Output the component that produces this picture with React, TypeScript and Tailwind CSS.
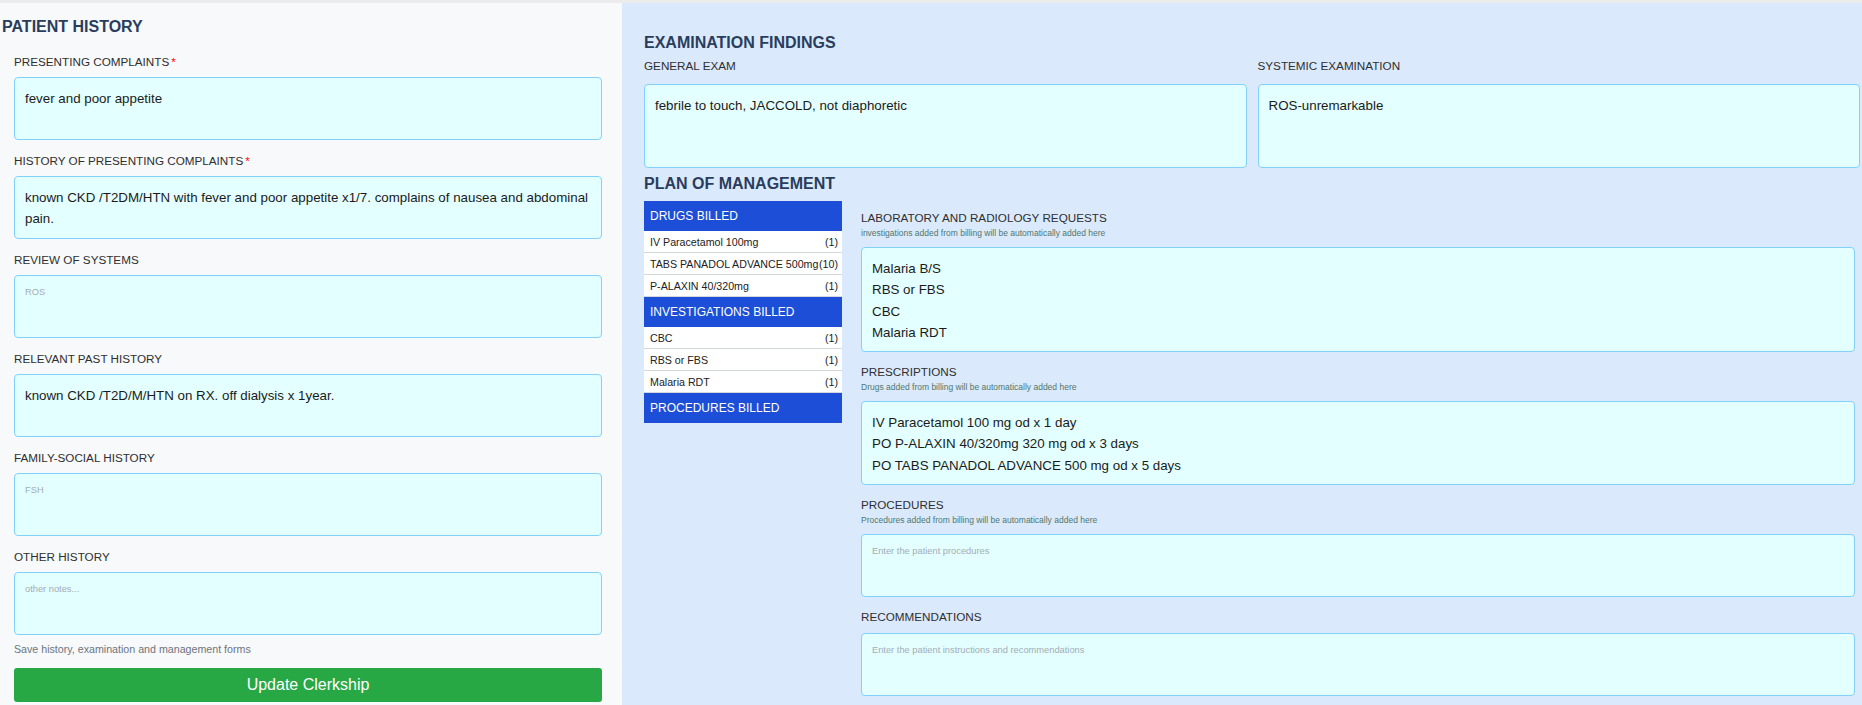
import React from 'react';

const font = { fontFamily: '"Liberation Sans", Arial, sans-serif' };

type BoxProps = { value?: string; placeholder?: string; height: string };

function Box({ value, placeholder, height }: BoxProps) {
  return (
    <div className={`rounded-[4px] border border-[#80d2fa] bg-[#e3ffff] px-[10px] pt-[10px] overflow-hidden ${height}`}>
      {value ? (
        <div className="text-[13.33px] leading-[21.33px] text-[#1b1b1b] whitespace-pre-line">{value}</div>
      ) : (
        <div className="text-[9.3px] leading-[12px] text-[#a4acb4]">{placeholder}</div>
      )}
    </div>
  );
}

function Label({ text, required }: { text: string; required?: boolean }) {
  return (
    <div className="text-[11.7px] leading-[16px] text-[#2f2f2f] uppercase">
      {text}
      {required && <span className="ml-[2px] text-[#f00]">*</span>}
    </div>
  );
}

function Hint({ text }: { text: string }) {
  return <div className="mt-px text-[8.5px] leading-[12px] text-[#4f786b]">{text}</div>;
}

const history = [
  { label: 'Presenting complaints', required: true, value: 'fever and poor appetite' },
  {
    label: 'History of presenting complaints',
    required: true,
    value: 'known CKD /T2DM/HTN with fever and poor appetite x1/7. complains of nausea and abdominal pain.',
  },
  { label: 'Review of systems', placeholder: 'ROS' },
  { label: 'Relevant past history', value: 'known CKD /T2D/M/HTN on RX. off dialysis x 1year.' },
  { label: 'Family-social history', placeholder: 'FSH' },
  { label: 'Other history', placeholder: 'other notes...' },
];

const drugs = [
  { name: 'IV Paracetamol 100mg', qty: '(1)' },
  { name: 'TABS PANADOL ADVANCE 500mg', qty: '(10)' },
  { name: 'P-ALAXIN 40/320mg', qty: '(1)' },
];

const investigations = [
  { name: 'CBC', qty: '(1)' },
  { name: 'RBS or FBS', qty: '(1)' },
  { name: 'Malaria RDT', qty: '(1)' },
];

function BilledHeader({ title }: { title: string }) {
  return <div className="h-[30px] flex items-center px-[6px] bg-[#1d4ed8] text-white text-[12px]">{title}</div>;
}

function BilledRow({ name, qty }: { name: string; qty: string }) {
  return (
    <div className="h-[22px] flex items-center justify-between pl-[6px] pr-[4px] bg-white border-b border-[#d4d7dc] text-[10.67px] text-[#222] whitespace-nowrap">
      <span>{name}</span>
      <span>{qty}</span>
    </div>
  );
}

export default function App() {
  return (
    <div style={font} className="w-[1862px] h-[705px] overflow-hidden flex flex-col bg-[#f8f9fb]">
      <div className="h-[3px] bg-[#ececec]" />
      <div className="flex flex-1">
        {/* Patient history */}
        <div className="w-[622px] bg-[#f8f9fb] pl-[2px] pt-[14px]">
          <h2 className="text-[16px] leading-[20px] font-bold text-[#293d5c]">PATIENT HISTORY</h2>
          <div className="pl-[12px] pr-[20px] pt-[17px]">
            {history.map((f, i) => (
              <div key={f.label} className={i > 0 ? 'mt-[13px]' : ''}>
                <Label text={f.label} required={f.required} />
                <div className="mt-[7px]">
                  <Box value={f.value} placeholder={f.placeholder} height="h-[63px]" />
                </div>
              </div>
            ))}
            <div className="mt-[7px] text-[10.67px] leading-[14px] text-[#6c757d]">
              Save history, examination and management forms
            </div>
            <button className="mt-[12px] w-full h-[34px] rounded-[3px] bg-[#28a745] text-white text-[16px]">
              Update Clerkship
            </button>
          </div>
        </div>

        {/* Examination + plan */}
        <div className="flex-1 bg-[#dbe9fd] pl-[22px] pr-[2px] pt-[30px]">
          <h2 className="text-[16px] leading-[20px] font-bold text-[#293d5c]">EXAMINATION FINDINGS</h2>
          <div className="mt-[5px] grid grid-cols-2 gap-x-[11px]">
            <div>
              <Label text="General exam" />
              <div className="mt-[10px]">
                <Box value="febrile to touch, JACCOLD, not diaphoretic" height="h-[84px]" />
              </div>
            </div>
            <div>
              <Label text="Systemic examination" />
              <div className="mt-[10px]">
                <Box value="ROS-unremarkable" height="h-[84px]" />
              </div>
            </div>
          </div>

          <h2 className="mt-[6px] text-[16px] leading-[20px] font-bold text-[#293d5c]">PLAN OF MANAGEMENT</h2>
          <div className="mt-[7px] flex gap-[19px] pr-[5px]">
            <div className="w-[198px] shrink-0 self-start">
              <BilledHeader title="DRUGS BILLED" />
              {drugs.map((d) => (
                <BilledRow key={d.name} {...d} />
              ))}
              <BilledHeader title="INVESTIGATIONS BILLED" />
              {investigations.map((d) => (
                <BilledRow key={d.name} {...d} />
              ))}
              <BilledHeader title="PROCEDURES BILLED" />
            </div>

            <div className="flex-1 pt-[9px]">
              <Label text="Laboratory and radiology requests" />
              <Hint text="investigations added from billing will be automatically added here" />
              <div className="mt-[8px]">
                <Box value={'Malaria B/S\nRBS or FBS\nCBC\nMalaria RDT'} height="h-[105px]" />
              </div>

              <div className="mt-[12px]">
                <Label text="Prescriptions" />
                <Hint text="Drugs added from billing will be automatically added here" />
                <div className="mt-[8px]">
                  <Box
                    value={
                      'IV Paracetamol 100 mg od x 1 day\nPO P-ALAXIN 40/320mg 320 mg od x 3 days\nPO TABS PANADOL ADVANCE 500 mg od x 5 days'
                    }
                    height="h-[84px]"
                  />
                </div>
              </div>

              <div className="mt-[12px]">
                <Label text="Procedures" />
                <Hint text="Procedures added from billing will be automatically added here" />
                <div className="mt-[8px]">
                  <Box placeholder="Enter the patient procedures" height="h-[63px]" />
                </div>
              </div>

              <div className="mt-[12px]">
                <Label text="Recommendations" />
                <div className="mt-[8px]">
                  <Box placeholder="Enter the patient instructions and recommendations" height="h-[63px]" />
                </div>
              </div>
            </div>
          </div>
        </div>
      </div>
    </div>
  );
}
